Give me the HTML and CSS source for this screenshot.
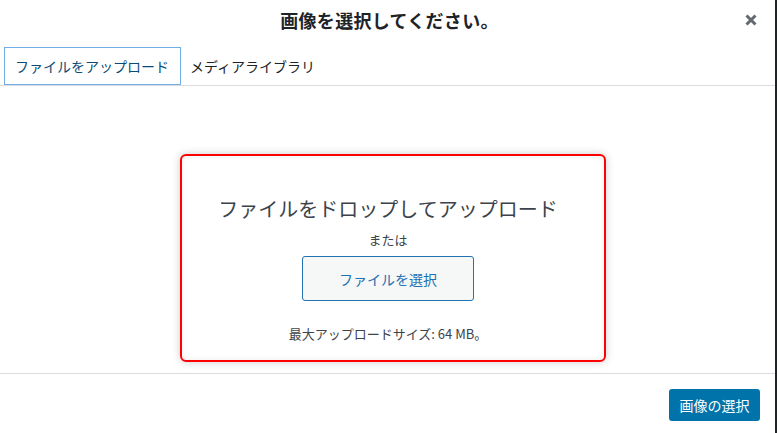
FILE: index.html
```html
<!DOCTYPE html>
<html lang="ja">
<head>
<meta charset="utf-8">
<title>画像を選択してください。</title>
<link rel="stylesheet" href="styles.css">
</head>
<body>
<div class="modal">
  <header class="head">
    <span></span>
    <h1 class="title">画像を選択してください。</h1>
    <button class="close" aria-label="閉じる">
      <svg width="14" height="14" viewBox="0 0 14 14"><path d="M2.5 2.5 L11.5 11.5 M11.5 2.5 L2.5 11.5" stroke="#646970" stroke-width="3" stroke-linecap="butt"/></svg>
    </button>
  </header>
  <nav class="tabs">
    <a class="tab active">ファイルをアップロード</a>
    <a class="tab">メディアライブラリ</a>
  </nav>
  <main class="content">
    <div class="uploader">
      <h2 class="drop">ファイルをドロップしてアップロード</h2>
      <p class="or">または</p>
      <button class="select">ファイルを選択</button>
      <p class="max">最大アップロードサイズ: 64 MB。</p>
    </div>
  </main>
  <footer class="foot">
    <button class="primary">画像の選択</button>
  </footer>
</div>
</body>
</html>
```
FILE: styles.css
```css
* { box-sizing: border-box; }
html, body { margin: 0; padding: 0; }
body {
  width: 777px;
  height: 433px;
  background: #fff;
  font-family: "Noto Sans CJK JP", "Liberation Sans", sans-serif;
  color: #1d2327;
  overflow: hidden;
}
.modal {
  width: 777px;
  height: 433px;
  border-right: 2px solid #1d2327;
  display: flex;
  flex-direction: column;
}
.head {
  height: 40px;
  display: grid;
  grid-template-columns: 1fr auto 1fr;
  align-items: center;
}
.title {
  margin: 0;
  font-size: 18px;
  font-weight: 700;
  line-height: 24px;
  color: #1d2327;
  padding-left: 4px;
  letter-spacing: 0.3px;
}
.close {
  justify-self: end;
  margin-right: 14px;
  width: 20px;
  height: 20px;
  padding: 0;
  border: 0;
  background: none;
  display: flex;
  align-items: center;
  justify-content: center;
}
.tabs {
  height: 46px;
  padding: 7px 0 0 4px;
  border-bottom: 1px solid #dcdcde;
  display: flex;
  align-items: flex-start;
}
.tab {
  height: 38px;
  padding: 0 8px;
  font-size: 14px;
  line-height: 36px;
  color: #1d2327;
  border: 1px solid transparent;
}
.tab.active {
  padding: 0 11px 0 10px;
  border-color: #72aee6;
  color: #0a4b78;
}
.content {
  height: 288px;
  border-bottom: 1px solid #dcdcde;
  padding: 68px 0 0 180px;
}
.uploader {
  width: 426px;
  height: 208px;
  border: 2px solid #f00;
  border-radius: 6px;
  box-shadow: 0 0 8px rgba(0,0,0,0.2), inset 0 0 6px rgba(0,0,0,0.08);
  display: flex;
  flex-direction: column;
  align-items: center;
  padding: 39px 0 0 0;
}
.drop {
  margin: 0 10px 0 0;
  font-size: 20px;
  font-weight: 400;
  line-height: 28px;
  color: #3c434a;
}
.or {
  margin: 7px 10px 0 0;
  font-size: 13px;
  line-height: 20px;
  color: #3c434a;
}
.select {
  margin: 6px 10px 0 0;
  width: 172px;
  height: 45px;
  border: 1px solid #2271b1;
  border-radius: 3px;
  background: #f6f7f7;
  color: #2271b1;
  font-family: inherit;
  font-size: 14px;
}
.max {
  margin: 23px 10px 0 0;
  font-size: 13px;
  line-height: 20px;
  color: #3c434a;
}
.foot {
  flex: 1;
  display: flex;
  justify-content: flex-end;
  align-items: flex-start;
  padding: 15px 15px 0 0;
}
.primary {
  width: 91px;
  height: 32px;
  border: 0;
  border-radius: 3px;
  background: #0073aa;
  color: #fff;
  font-family: inherit;
  font-size: 14px;
  padding: 0;
}
```
